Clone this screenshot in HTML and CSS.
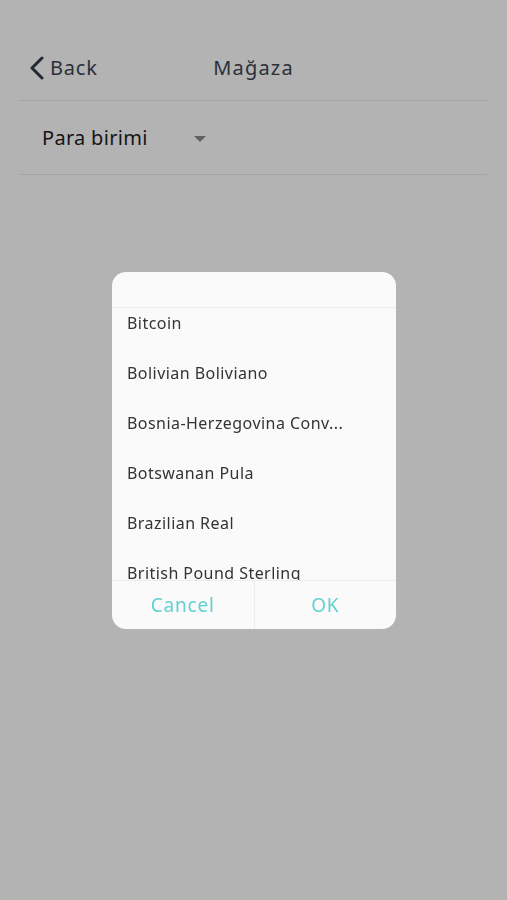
FILE: index.html
```html
<!DOCTYPE html>
<html>
<head>
    <title>Mağaza</title>
    <meta charset="UTF-8">
    <link rel="stylesheet" href="styles.css">
</head>
<body>
    <div class="page">
        <div class="navbar">
            <a class="back">
                <svg width="16" height="24" viewBox="0 0 16 24"><path d="M13 2 L3 12 L13 22" fill="none" stroke="#2f3a4a" stroke-width="3" stroke-linecap="round" stroke-linejoin="round"/></svg>
                <span>Back</span>
            </a>
            <div class="title">Mağaza</div>
        </div>
        <div class="row">
            <span class="label">Para birimi</span>
            <span class="caret"></span>
        </div>
    </div>

    <div class="overlay">
        <div class="dialog">
            <div class="dialog-head"></div>
            <div class="list">
                <div class="list-inner">
                    <div class="item">Bitcoin</div>
                    <div class="item">Bolivian Boliviano</div>
                    <div class="item">Bosnia-Herzegovina Conv...</div>
                    <div class="item">Botswanan Pula</div>
                    <div class="item">Brazilian Real</div>
                    <div class="item">British Pound Sterling</div>
                </div>
            </div>
            <div class="buttons">
                <div class="btn">Cancel</div>
                <div class="btn">OK</div>
            </div>
        </div>
    </div>
</body>
</html>
```

FILE: styles.css
```css
body { margin: 0; font-family: "Noto Sans", sans-serif; background: #fcfcfc; }
.page { padding: 0 20px; height: 900px; }

.navbar { position: relative; height: 100px; display: flex; align-items: center; justify-content: center; border-bottom: 1px solid #e8e8e8; }
.back { position: absolute; left: 9px; top: 54px; display: flex; align-items: center; gap: 5px; color: #3d4552; font-size: 20px; letter-spacing: 0.8px; }
.title { margin-top: 34px; font-size: 20px; color: #3d4552; letter-spacing: 1.2px; }

.row { height: 73px; display: flex; align-items: center; padding-left: 22px; border-bottom: 1px solid #e8e8e8; }
.label { font-size: 20px; color: #1e1e1e; width: 152px; letter-spacing: 0.3px; }
.caret { width: 0; height: 0; border-left: 6px solid transparent; border-right: 6px solid transparent; border-top: 6px solid #8a8a8a; margin-top: 2px; }

.overlay { position: fixed; inset: 0; background: rgba(0,0,0,0.29); display: flex; align-items: center; justify-content: center; }
.dialog { width: 284px; height: 357px; margin-left: 1px; background: #fafafa; border-radius: 14px; overflow: hidden; display: flex; flex-direction: column; }
.dialog-head { height: 35px; border-bottom: 1px solid #ececec; flex: none; }
.list { height: 272px; overflow: hidden; flex: none; }
.list-inner { margin-top: -10px; }
.item { height: 50px; display: flex; align-items: center; padding-left: 15px; font-size: 16px; color: #333; letter-spacing: 0.45px; }
.buttons { flex: 1; display: flex; border-top: 1px solid #ececec; }
.btn { flex: 1; display: flex; align-items: center; justify-content: center; font-size: 19px; color: #62d1d1; letter-spacing: 0.8px; }
.btn + .btn { border-left: 1px solid #ececec; }
```
